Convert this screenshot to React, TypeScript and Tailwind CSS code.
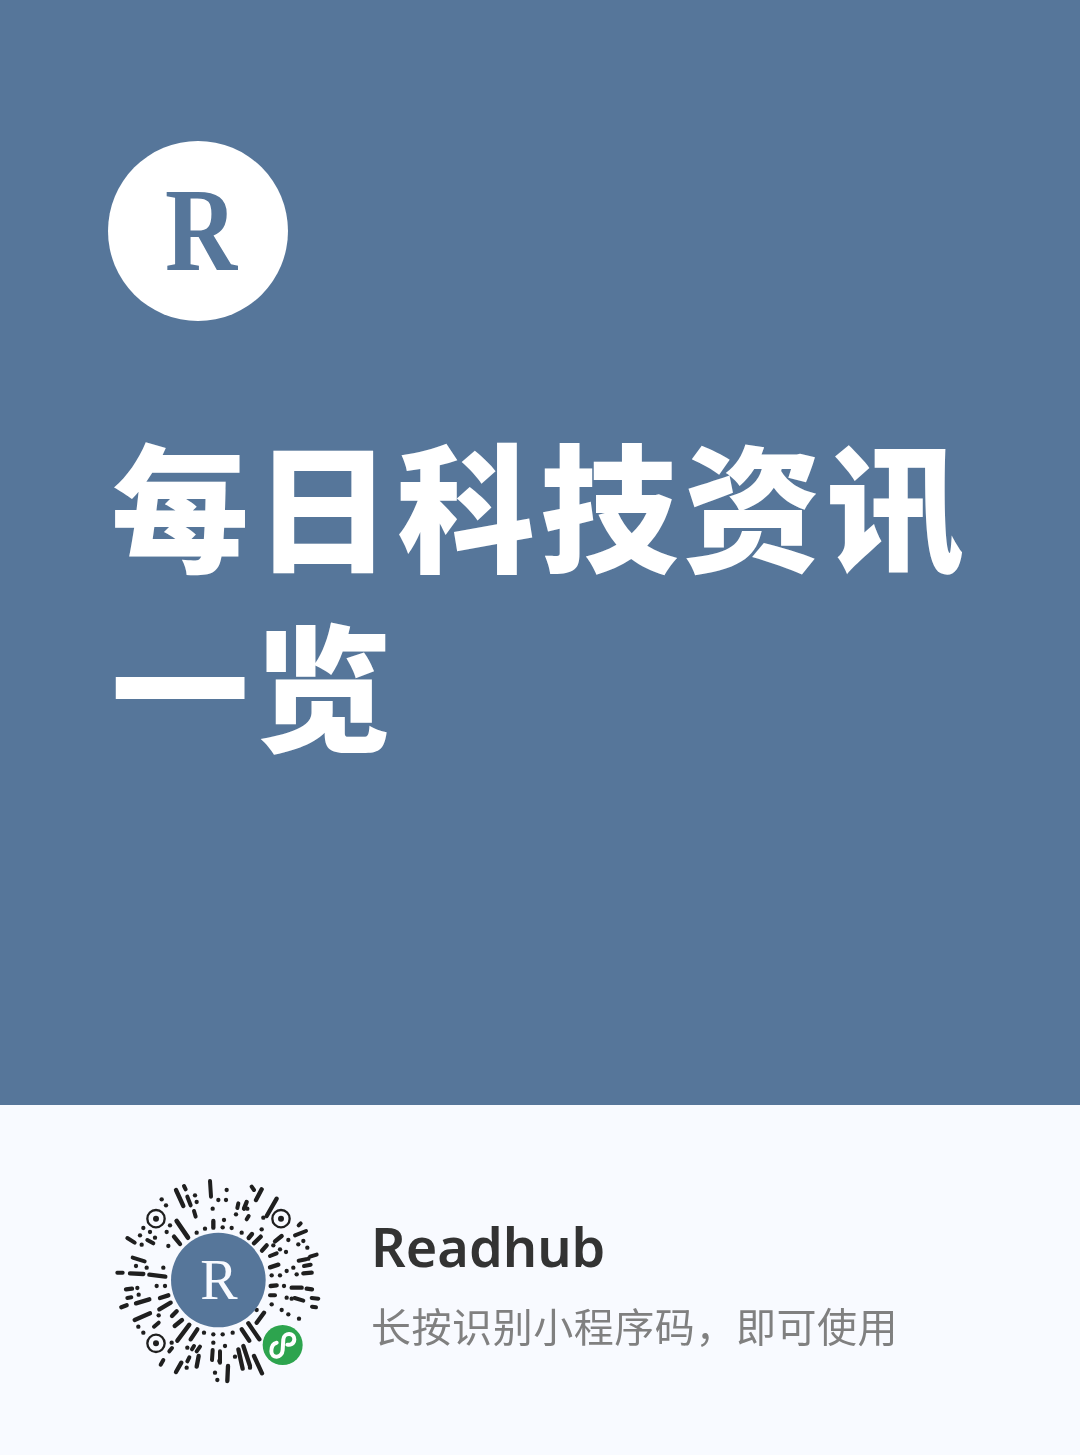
const lines: number[][] = [
  // top
  [330,45,333,92,12],[228,72,250,120,13],[252,60,257,70,12],[262,92,272,118,12],[282,135,287,152,12],
  [455,62,462,72,12],[485,70,468,102,13],[440,108,432,128,13],[415,112,412,126,12],[530,98,500,150,13],
  [340,165,340,185,13],[230,165,264,215,14],[222,212,240,234,13],[440,160,446,150,12],
  [602,172,596,178,12],[618,195,585,208,12],[545,210,525,226,13],[500,238,486,254,13],[482,212,462,232,13],[456,204,446,216,13],
  [82,216,104,230,12],[142,222,160,232,12],[98,275,134,286,12],[90,322,130,324,13],[148,326,196,332,13],[52,320,68,320,12],
  [650,266,630,272,12],[618,280,596,284,12],[632,296,612,300,12],[535,296,510,304,13],[635,320,610,322,13],[530,262,510,270,12],
  [530,358,512,360,13],[605,365,575,365,13],[636,370,620,368,13],[655,398,635,396,12],[610,404,584,396,12],[648,424,636,422,12],
  [525,388,510,388,12],[492,440,470,470,13],
  [78,370,96,368,13],[82,396,94,394,12],[148,400,108,412,13],[80,418,64,424,13],[205,388,180,396,13],[212,410,178,430,13],
  [150,442,104,462,13],[230,436,216,450,13],[246,462,224,480,13],[268,476,232,524,13],[292,490,272,520,13],[176,470,162,482,12],
  [425,490,448,524,13],[445,472,478,520,13],
  [338,552,336,582,12],[360,556,360,590,12],[384,600,382,645,13],[430,540,450,600,13],[415,550,428,608,13],[462,570,486,622,13],
  [300,542,290,556,12],[282,540,276,550,12],[296,570,290,602,13],[268,574,262,586,12],[244,590,228,618,13],[216,546,208,556,12],[190,582,182,596,12],
];
const dots: number[][] = [
  [338,128],[355,102],[378,102],[380,72],[285,88],[290,108],[408,145],[442,128],[490,155],[372,162],[368,184],[315,188],[395,186],[425,200],
  [290,200],[210,178],[200,198],[130,186],[150,198],[120,208],[125,236],[165,215],[185,100],[198,118],[595,235],[610,225],
  [565,222],[540,250],[558,258],[622,245],[108,300],[140,305],[190,305],[170,360],[195,360],[112,366],[116,386],[560,315],[540,328],[590,325],[515,328],
  [552,360],[560,395],[575,398],[545,432],[565,445],[597,458],[515,415],[470,432],[115,482],[130,500],[176,448],[312,500],[340,505],[368,505],[398,500],[340,530],
  [262,545],[260,605],[358,585],[345,620],[352,642],[450,605],[405,572],[215,530],[205,240],[520,238],[625,278],[580,305],[485,190],[375,540],
];
const finder = [[168,158],[543,158],[168,532]];

function QrCode() {
  return (
    <div className="relative w-[230px] h-[230px] shrink-0">
      <svg viewBox="0 0 690 690" className="absolute inset-0 w-full h-full">
        {lines.map(([a,b,c,d,w],i) => <line key={i} x1={a} y1={b} x2={c} y2={d} stroke="#1f1f1f" strokeWidth={w} strokeLinecap="round" />)}
        {dots.map(([a,b],i) => <circle key={i} cx={a} cy={b} r={6.5} fill="#1f1f1f" />)}
        {finder.map(([a,b],i) => (
          <g key={i}>
            <circle cx={a} cy={b} r={26} fill="none" stroke="#1f1f1f" strokeWidth={7} />
            <circle cx={a} cy={b} r={9} fill="#1f1f1f" />
          </g>
        ))}
        <circle cx={355} cy={342} r={142} fill="#56769a" />
        <circle cx={548} cy={537} r={60} fill="#2da44e" />
        <path d="M514 556 C514 578 546 578 548 552 L550 520 C552 498 584 500 583 520 C582 534 570 538 562 536 M530 530 C520 532 514 542 514 556" fill="none" stroke="#fff" strokeWidth={12} strokeLinecap="round" />
      </svg>
      <span className="absolute left-[69px] top-[84px] w-[100px] text-center text-[56px] leading-[60px] text-[#f8faff] font-['Liberation_Serif',serif]">R</span>
    </div>
  );
}

export default function App() {
  return (
    <div className="w-[1080px] h-[1455px] flex flex-col overflow-hidden">
      <div className="h-[1105px] bg-[#56769a] pt-[141px] pl-[108px]">
        <div className="w-[180px] h-[180px] rounded-full bg-white flex items-center justify-center">
          <span className="text-[#56769a] text-[119px] leading-none font-bold scale-x-[0.84] font-['Liberation_Serif',serif] ml-[6px] mb-[2px]">R</span>
        </div>
        <h1 className="mt-[90px] ml-[3px] w-[880px] text-white text-[138px] leading-[180px] font-black tracking-[5px] font-['Noto_Sans_CJK_SC',sans-serif]">每日科技资讯一览</h1>
      </div>
      <div className="flex-1 bg-[#f8faff] flex items-start pl-[100px] pt-[61px]">
        <QrCode />
        <div className="ml-[41px] pt-[50px]">
          <div className="text-[#333333] text-[54px] leading-[60px] font-semibold font-['Noto_Sans','Noto_Sans_CJK_SC',sans-serif]">Readhub</div>
          <div className="mt-[24px] text-[#808080] text-[40px] leading-[50px] tracking-[0.55px] [will-change:transform] font-['Noto_Sans_CJK_SC',sans-serif]">长按识别小程序码，即可使用</div>
        </div>
      </div>
    </div>
  );
}
